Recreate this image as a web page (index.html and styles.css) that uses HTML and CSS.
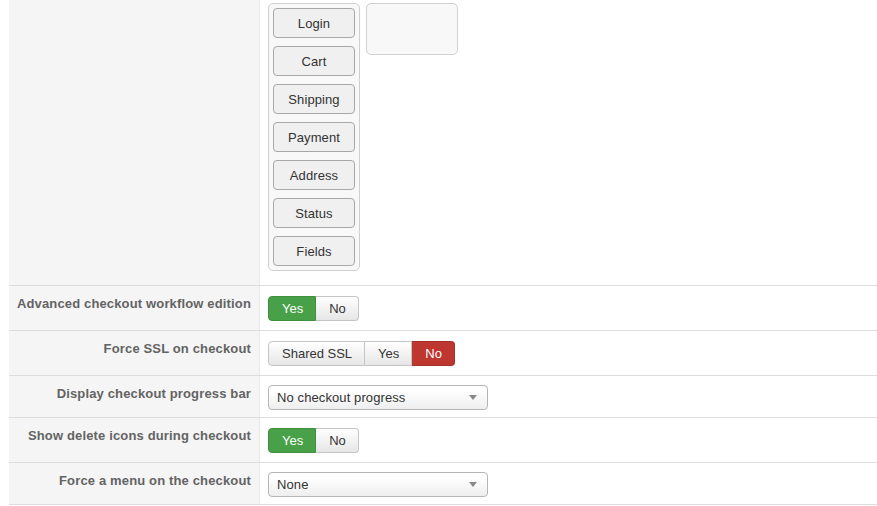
FILE: index.html
```html
<!DOCTYPE html>
<html>
<head>
<meta charset="utf-8">
<link rel="stylesheet" href="styles.css">
</head>
<body>
<div class="form">
  <div class="row row-top">
    <div class="label"></div>
    <div class="field">
      <div class="steps">
        <div class="box box-list">
          <span class="step">Login</span>
          <span class="step">Cart</span>
          <span class="step">Shipping</span>
          <span class="step">Payment</span>
          <span class="step">Address</span>
          <span class="step">Status</span>
          <span class="step">Fields</span>
        </div>
        <div class="box box-empty"></div>
      </div>
    </div>
  </div>
  <div class="row">
    <div class="label">Advanced checkout workflow edition</div>
    <div class="field pad-toggle">
      <div class="btn-group"><span class="btn on-green">Yes</span><span class="btn">No</span></div>
    </div>
  </div>
  <div class="row">
    <div class="label">Force SSL on checkout</div>
    <div class="field pad-toggle">
      <div class="btn-group"><span class="btn">Shared SSL</span><span class="btn">Yes</span><span class="btn on-red">No</span></div>
    </div>
  </div>
  <div class="row">
    <div class="label">Display checkout progress bar</div>
    <div class="field pad-select">
      <div class="select"><span>No checkout progress</span><span class="arrow"></span></div>
    </div>
  </div>
  <div class="row">
    <div class="label">Show delete icons during checkout</div>
    <div class="field pad-toggle">
      <div class="btn-group"><span class="btn on-green">Yes</span><span class="btn">No</span></div>
    </div>
  </div>
  <div class="row">
    <div class="label">Force a menu on the checkout</div>
    <div class="field pad-select">
      <div class="select"><span>None</span><span class="arrow"></span></div>
    </div>
  </div>
</div>
</body>
</html>
```
FILE: styles.css
```css
html, body {
  margin: 0;
  padding: 0;
  background: #fff;
}
body {
  font-family: "Liberation Sans", Arial, sans-serif;
  font-size: 13px;
  color: #333;
  padding-left: 9px;
}
.form {
  border-bottom: 1px solid #ddd;
}
.row {
  display: flex;
  border-top: 1px solid #ddd;
}
.row-top {
  border-top: none;
}
.label {
  flex: none;
  box-sizing: border-box;
  background: #f5f5f5;
  border-right: 1px solid #e8e8e8;
  width: 251px;
  text-align: right;
  padding: 9px 8px 0 0;
  font-weight: bold;
  color: #636363;
  line-height: 17px;
  letter-spacing: 0.15px;
}
.field {
  flex: 1;
  padding-left: 8px;
}
.row-top .field {
  padding-top: 3px;
  padding-bottom: 14px;
}
.pad-toggle {
  padding-top: 10px;
  padding-bottom: 9px;
}
.pad-select {
  padding-top: 9px;
  padding-bottom: 7px;
}
.steps {
  display: flex;
  align-items: flex-start;
  gap: 6px;
}
.box {
  box-sizing: border-box;
  width: 92px;
  border: 1px solid #d0d0d0;
  border-radius: 5px;
  background: #f8f8f8;
  padding: 4px;
}
.box-list {
  display: flex;
  flex-direction: column;
  gap: 8px;
}
.box-empty {
  height: 52px;
}
.step {
  box-sizing: border-box;
  height: 30px;
  padding-top: 1px;
  line-height: 27px;
  border: 1px solid #a8a8a8;
  border-radius: 4px;
  background: #f0f0f0;
  text-align: center;
  color: #333;
  letter-spacing: 0.1px;
}
.btn-group {
  display: inline-flex;
}
.btn {
  display: inline-block;
  padding: 3px 12px 3px 13px;
  line-height: 17px;
  border: 1px solid #c5c5c5;
  border-left-width: 0;
  background: linear-gradient(#ffffff, #e6e6e6);
  color: #333;
}
.btn:first-child {
  border-left-width: 1px;
  border-radius: 4px 0 0 4px;
}
.btn:last-child {
  border-radius: 0 4px 4px 0;
}
.on-green {
  background: #48a148;
  border-color: #3f8f3f;
  color: #fff;
}
.on-red {
  background: #bd362f;
  border-color: #a8302a;
  color: #fff;
}
.select {
  box-sizing: border-box;
  width: 220px;
  height: 25px;
  display: flex;
  align-items: center;
  justify-content: space-between;
  padding: 0 10px 0 8px;
  border: 1px solid #b5b5b5;
  border-radius: 4px;
  background: linear-gradient(#ffffff 20%, #eeeeee);
  color: #333;
  letter-spacing: 0.1px;
}
.arrow {
  width: 0;
  height: 0;
  border-left: 4px solid transparent;
  border-right: 4px solid transparent;
  border-top: 5px solid #888;
}
```
